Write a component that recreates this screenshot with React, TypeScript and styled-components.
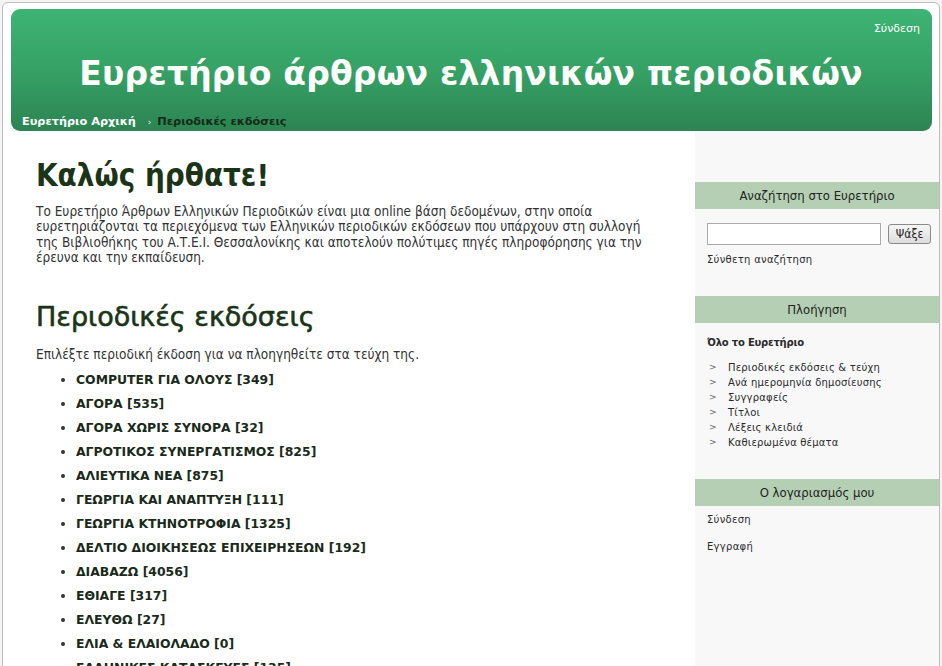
import React from 'react'
import styled, { createGlobalStyle } from 'styled-components'

const GlobalStyle = createGlobalStyle`
  html, body {
    margin: 0;
    padding: 0;
    background: #f4f4f4;
  }
  body {
    font-family: "DejaVu Sans", Verdana, sans-serif;
    color: #333;
  }
`

const Page = styled.div`
  margin: 2px 0 0 2px;
  width: 936px;
  height: 700px;
  background: #fff;
  border: 1px solid #bdbdbd;
  border-radius: 6px;
  overflow: hidden;
  display: flex;
  flex-direction: column;
`

const Header = styled.header`
  margin: 6px 7px 0 8px;
  height: 122px;
  border-radius: 9px;
  background: linear-gradient(to bottom, #3db474 0%, #36a165 50%, #2c8452 100%);
  display: flex;
  flex-direction: column;
  padding: 0 12px 0 11px;
  box-sizing: border-box;
`

const TopLinks = styled.div`
  display: flex;
  justify-content: flex-end;
  padding-top: 13px;
  height: 28px;
  box-sizing: border-box;
  a {
    color: #fff;
    font-size: 11px;
    text-decoration: none;
  }
`

const SiteTitle = styled.h1`
  margin: 0;
  text-align: center;
  color: #fff;
  font-size: 33px;
  font-weight: bold;
  line-height: 1;
  padding-top: 20px;
  letter-spacing: 0.2px;
`

const Breadcrumbs = styled.div`
  margin-top: auto;
  padding-bottom: 3px;
  display: flex;
  align-items: baseline;
  font-size: 11.3px;
  font-weight: bold;
`

const CrumbLink = styled.a`
  color: #fff;
  text-decoration: none;
`

const CrumbSep = styled.span`
  color: #e8f5ea;
  font-size: 9px;
  font-weight: normal;
  margin: 0 6px 0 12px;
`

const CrumbCurrent = styled.span`
  color: #152a17;
`

const Body = styled.div`
  display: flex;
  flex: 1;
`

const Main = styled.main`
  width: 690px;
  padding: 24px 32px 0 33px;
  box-sizing: border-box;
`

const Welcome = styled.h2`
  margin: 0;
  font-size: 31px;
  font-weight: bold;
  color: #1b3418;
  line-height: 40px;
  font-stretch: condensed;
  font-family: "DejaVu Sans Condensed", "DejaVu Sans", sans-serif;
`

const Intro = styled.p`
  margin: 9px 0 0;
  font-family: "DejaVu Sans Condensed", "DejaVu Sans", sans-serif;
  font-stretch: condensed;
  font-size: 13.5px;
  line-height: 15.3px;
  color: #333;
`

const SectionTitle = styled.h2`
  margin: 34px 0 0;
  font-size: 27px;
  font-weight: normal;
  color: #1b3418;
  line-height: 36px;
  -webkit-text-stroke: 0.6px #1b3418;
`

const Lead = styled.p`
  margin: 12px 0 0;
  font-family: "DejaVu Sans Condensed", "DejaVu Sans", sans-serif;
  font-stretch: condensed;
  font-size: 13.5px;
  line-height: 15px;
  color: #333;
`

const MagList = styled.ul`
  margin: 6px 0 0;
  padding-left: 40px;
  list-style: disc;
`

const MagItem = styled.li`
  font-size: 12.4px;
  font-weight: bold;
  line-height: 24px;
  color: #1a2a1a;
  &::marker {
    color: #333;
    font-size: 13px;
  }
  a {
    color: #1a2a1a;
    text-decoration: none;
  }
`

const Sidebar = styled.aside`
  flex: 1;
  background: #f8f8f8;
  padding-top: 51px;
  margin-left: 3px;
`

const Block = styled.section<{ $space: number }>`
  margin-bottom: ${p => p.$space}px;
`

const BlockTitle = styled.h3`
  margin: 0;
  height: 27px;
  line-height: 27px;
  background: #b4cfb3;
  text-align: center;
  font-family: "DejaVu Sans Condensed", "DejaVu Sans", sans-serif;
  font-stretch: condensed;
  font-weight: normal;
  font-size: 13px;
  color: #222;
`

const BlockBody = styled.div`
  padding: 14px 8px 0 12px;
`

const SearchRow = styled.form`
  display: flex;
  align-items: center;
  gap: 7px;
`

const SearchInput = styled.input`
  width: 174px;
  height: 22px;
  box-sizing: border-box;
  border: 1px solid #a9a9a9;
  background: #fff;
  margin: 0;
`

const SearchButton = styled.button`
  height: 20px;
  width: 43px;
  padding: 0;
  font-family: "DejaVu Sans Condensed", "DejaVu Sans", sans-serif;
  font-stretch: condensed;
  font-size: 12px;
  color: #222;
  border: 1px solid #8a8a8a;
  border-radius: 3px;
  background: linear-gradient(#f6f6f6, #dcdcdc);
`

const SmallLink = styled.a<{ $bold?: boolean }>`
  display: block;
  font-size: 10px;
  color: #2a2a2a;
  text-decoration: none;
  font-weight: ${p => (p.$bold ? 'bold' : 'normal')};
  letter-spacing: ${p => (p.$bold ? '-0.2px' : '0.3px')};
`

const AdvancedLink = styled(SmallLink)`
  margin-top: 9px;
`

const NavList = styled.ul`
  margin: 12px 0 0;
  padding: 0 0 0 2px;
  list-style: none;
`

const NavItem = styled.li`
  display: flex;
  font-size: 10px;
  line-height: 15px;
  letter-spacing: 0.2px;
  color: #2a2a2a;
  &::before {
    content: '>';
    width: 19px;
    color: #666;
    font-size: 9px;
  }
`

const AccountBody = styled.div`
  padding: 8px 8px 0 12px;
  display: flex;
  flex-direction: column;
  gap: 16px;
`

const magazines = [
  ['COMPUTER ΓΙΑ ΟΛΟΥΣ', 349],
  ['ΑΓΟΡΑ', 535],
  ['ΑΓΟΡΑ ΧΩΡΙΣ ΣΥΝΟΡΑ', 32],
  ['ΑΓΡΟΤΙΚΟΣ ΣΥΝΕΡΓΑΤΙΣΜΟΣ', 825],
  ['ΑΛΙΕΥΤΙΚΑ ΝΕΑ', 875],
  ['ΓΕΩΡΓΙΑ ΚΑΙ ΑΝΑΠΤΥΞΗ', 111],
  ['ΓΕΩΡΓΙΑ ΚΤΗΝΟΤΡΟΦΙΑ', 1325],
  ['ΔΕΛΤΙΟ ΔΙΟΙΚΗΣΕΩΣ ΕΠΙΧΕΙΡΗΣΕΩΝ', 192],
  ['ΔΙΑΒΑΖΩ', 4056],
  ['ΕΘΙΑΓΕ', 317],
  ['ΕΛΕΥΘΩ', 27],
  ['ΕΛΙΑ & ΕΛΑΙΟΛΑΔΟ', 0],
  ['ΕΛΛΗΝΙΚΕΣ ΚΑΤΑΣΚΕΥΕΣ', 135],
] as const

const navLinks = [
  'Περιοδικές εκδόσεις & τεύχη',
  'Ανά ημερομηνία δημοσίευσης',
  'Συγγραφείς',
  'Τίτλοι',
  'Λέξεις κλειδιά',
  'Καθιερωμένα θέματα',
]

export default function App() {
  return (
    <>
      <GlobalStyle />
      <Page>
        <Header>
          <TopLinks>
            <a href="#">Σύνδεση</a>
          </TopLinks>
          <SiteTitle>Ευρετήριο άρθρων ελληνικών περιοδικών</SiteTitle>
          <Breadcrumbs>
            <CrumbLink href="#">Ευρετήριο Αρχική</CrumbLink>
            <CrumbSep>›</CrumbSep>
            <CrumbCurrent>Περιοδικές εκδόσεις</CrumbCurrent>
          </Breadcrumbs>
        </Header>
        <Body>
          <Main>
            <Welcome>Καλώς ήρθατε!</Welcome>
            <Intro>
              Το Ευρετήριο Άρθρων Ελληνικών Περιοδικών είναι μια online βάση δεδομένων, στην οποία
              ευρετηριάζονται τα περιεχόμενα των Ελληνικών περιοδικών εκδόσεων που υπάρχουν στη συλλογή
              της Βιβλιοθήκης του Α.Τ.Ε.Ι. Θεσσαλονίκης και αποτελούν πολύτιμες πηγές πληροφόρησης για την
              έρευνα και την εκπαίδευση.
            </Intro>
            <SectionTitle>Περιοδικές εκδόσεις</SectionTitle>
            <Lead>Επιλέξτε περιοδική έκδοση για να πλοηγηθείτε στα τεύχη της.</Lead>
            <MagList>
              {magazines.map(([name, count]) => (
                <MagItem key={name}>
                  <a href="#">
                    {name} [{count}]
                  </a>
                </MagItem>
              ))}
            </MagList>
          </Main>
          <Sidebar>
            <Block $space={31}>
              <BlockTitle>Αναζήτηση στο Ευρετήριο</BlockTitle>
              <BlockBody>
                <SearchRow onSubmit={e => e.preventDefault()}>
                  <SearchInput type="text" />
                  <SearchButton type="submit">Ψάξε</SearchButton>
                </SearchRow>
                <AdvancedLink href="#">Σύνθετη αναζήτηση</AdvancedLink>
              </BlockBody>
            </Block>
            <Block $space={29}>
              <BlockTitle>Πλοήγηση</BlockTitle>
              <BlockBody>
                <SmallLink href="#" $bold>
                  Όλο το Ευρετήριο
                </SmallLink>
                <NavList>
                  {navLinks.map(l => (
                    <NavItem key={l}>{l}</NavItem>
                  ))}
                </NavList>
              </BlockBody>
            </Block>
            <Block $space={0}>
              <BlockTitle>Ο λογαριασμός μου</BlockTitle>
              <AccountBody>
                <SmallLink href="#">Σύνδεση</SmallLink>
                <SmallLink href="#">Εγγραφή</SmallLink>
              </AccountBody>
            </Block>
          </Sidebar>
        </Body>
      </Page>
    </>
  )
}
